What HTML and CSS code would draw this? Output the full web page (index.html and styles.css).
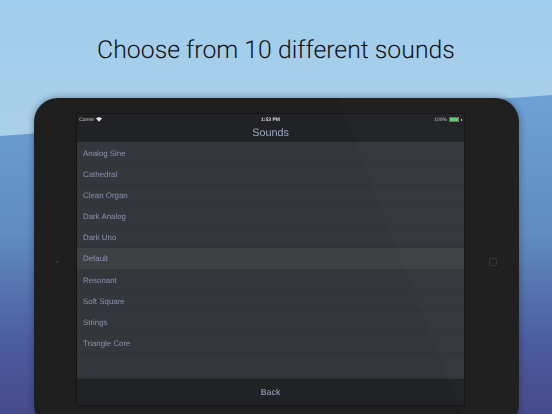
FILE: index.html
```html
<!DOCTYPE html>
<html>
<head>
	<meta charset="UTF-8"/>
	<title>Sounds</title>
	<link rel="stylesheet" href="styles.css">
</head>
<body>

<div class="page">
	<h1 class="headline">Choose from 10 different sounds</h1>

	<div class="tablet">
		<div class="camera"></div>
		<div class="screen">
			<div class="status">
				<div class="status-left">
					<span>Carrier</span>
					<svg class="wifi" width="6" height="5" viewBox="0 0 12 9"><path d="M0 2.6C3.4-.8 8.6-.8 12 2.6L6 9z" fill="#e4e4e4"/></svg>
				</div>
				<div class="status-time">1:53 PM</div>
				<div class="status-right">
					<span>100%</span>
					<span class="battery"><span class="battery-fill"></span></span>
					<span class="battery-tip"></span>
				</div>
			</div>
			<div class="nav">Sounds</div>
			<ul class="sounds">
				<li>Analog Sine</li>
				<li>Cathedral</li>
				<li>Clean Organ</li>
				<li>Dark Analog</li>
				<li>Dark Uno</li>
				<li class="on">Default</li>
				<li>Resonant</li>
				<li>Soft Square</li>
				<li>Strings</li>
				<li>Triangle Core</li>
			</ul>
			<div class="back">Back</div>
		</div>
		<div class="home"><span class="home-square"></span></div>
	</div>
</div>

</body>
</html>
```

FILE: styles.css
```css
*{
	border:0;
	padding:0;
	margin:0;
	box-sizing:border-box;
}
html,body{
	height:414px;
	overflow:hidden;
}
body{
	font-family:"Liberation Sans",Arial,sans-serif;
	text-rendering:geometricPrecision;
	background:linear-gradient(#a0cdec,#aacfe9 130px);
}
.page{
	position:relative;
	width:552px;
	height:414px;
	overflow:hidden;
	padding-top:36px;
}
/* darker blue slope behind the tablet */
.page::before{
	content:"";
	position:absolute;
	left:0;
	top:90px;
	width:552px;
	height:324px;
	background:linear-gradient(#6ea3d6,#5f8bc0 45%,#4b5c9f 78%,#474a8b);
	clip-path:polygon(0 46px,100% 5px,100% 100%,0 100%);
}
.headline{
	position:relative;
	height:28px;
	font-family:Roboto,"Liberation Sans",sans-serif;
	font-size:24.8px;
	line-height:29px;
	font-weight:300;
	color:#0e1115;
	text-align:center;
}
.tablet{
	position:relative;
	display:flex;
	align-items:flex-start;
	width:485px;
	height:330px;
	margin:34px 0 0 34px;
	padding:16px 0 0 43px;
	background:#1e1e1f;
	border-radius:24px;
	box-shadow:0 0 7px rgba(20,30,50,.45);
}
/* glass reflection */
.tablet::after{
	content:"";
	position:absolute;
	left:0;
	top:0;
	width:100%;
	height:100%;
	background:rgba(255,255,255,.012);
	border-radius:24px;
	clip-path:polygon(304px 0,100% 0,100% 100%,433px 100%);
	pointer-events:none;
}
.camera{
	position:absolute;
	left:22px;
	top:163px;
	width:2px;
	height:2px;
	border-radius:50%;
	background:#3b3f48;
}
.screen{
	display:flex;
	flex-direction:column;
	flex-shrink:0;
	width:387px;
	height:291px;
	background:#33363b;
	outline:1px solid #151516;
	filter:blur(.3px);
}
.status{
	display:flex;
	justify-content:space-between;
	align-items:center;
	height:10px;
	padding:1px 2px 0 2px;
	font-size:5px;
	color:#c4c5c8;
	background:#212225;
}
.status-left,.status-right{
	display:flex;
	align-items:center;
	gap:2px;
	width:60px;
}
.status-right{
	justify-content:flex-end;
}
.status-time{
	font-weight:bold;
	color:#d8d8da;
}
.battery{
	display:block;
	width:10px;
	height:5px;
	padding:1px;
	background:#6f7072;
}
.battery-fill{
	display:block;
	height:3px;
	background:#4fd964;
}
.battery-tip{
	width:1px;
	height:2px;
	background:#d0d0d0;
}
.nav{
	height:18px;
	font-size:10.8px;
	line-height:19px;
	text-align:center;
	color:#9ba9c2;
	background:#212225;
}
.sounds{
	flex:1;
	padding-top:.4px;
	list-style:none;
	background:#33363b;
}
.sounds li{
	height:21.1px;
	padding:.6px 0 0 6px;
	font-size:7.9px;
	line-height:21px;
	color:#8a93ae;
	border-bottom:1px solid #2f3236;
}
.sounds .on{
	background:#3f4043;
	border-bottom-color:#3f4043;
}
.back{
	height:27px;
	font-size:8.8px;
	line-height:27px;
	text-align:center;
	color:#9ba9c2;
	background:#212226;
	border-top:1px solid #2a2c30;
}
.home{
	display:flex;
	align-items:center;
	justify-content:center;
	width:24px;
	height:24px;
	margin:136px 0 0 17px;
	border:1px solid #232324;
	border-radius:50%;
}
.home-square{
	width:8px;
	height:8px;
	border:1px solid #36373a;
	border-radius:2px;
}
```
